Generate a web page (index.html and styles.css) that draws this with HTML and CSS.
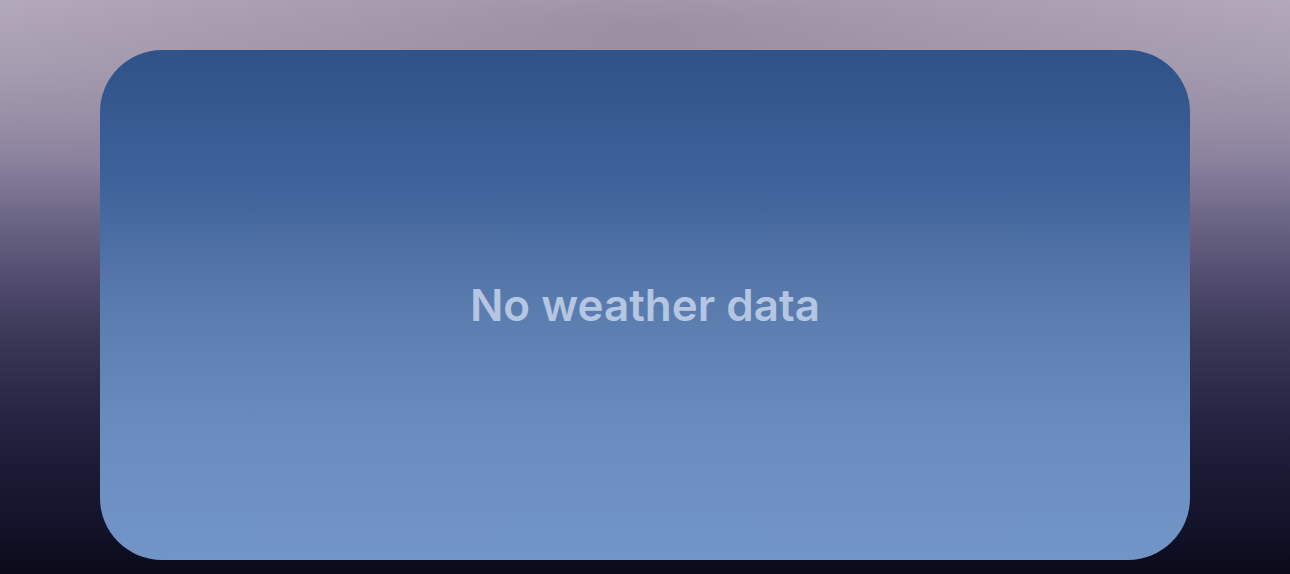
FILE: index.html
```html
<!DOCTYPE html>
<html>
<head>
<meta charset="utf-8">
<link rel="stylesheet" href="styles.css">
</head>
<body>
<div class="scene">
  <div class="card">
    <p class="empty">No weather data</p>
  </div>
</div>
</body>
</html>
```
FILE: styles.css
```css
html, body {
  margin: 0;
  padding: 0;
  width: 1290px;
  height: 574px;
  overflow: hidden;
}
.scene {
  width: 1290px;
  height: 574px;
  box-sizing: border-box;
  padding: 50px 100px 14px 100px;
  background:
    radial-gradient(ellipse 900px 170px at 50% 30px, rgba(140,122,145,0.6) 0%, rgba(140,122,145,0.3) 50%, rgba(140,122,145,0) 100%),
    linear-gradient(180deg, #bab2c2 0%, #aea6b8 10%, #9f96ac 18%, #8a819d 28%, #6c6686 38%, #534e70 48%, #3c3858 58%, #2a2747 70%, #1b1a34 82%, #12122a 92%, #0a0a18 100%);
}
.card {
  height: 510px;
  border-radius: 62px;
  background: linear-gradient(180deg, #2f5388 0%, #3d6199 25%, #5a7bad 50%, #6a8cc0 75%, #7295c7 100%);
  display: flex;
  align-items: center;
  justify-content: center;
}
.empty {
  margin: 0;
  font-family: Inter, "Noto Sans", sans-serif;
  font-weight: 600;
  font-size: 44px;
  color: #b5c6e2;
  letter-spacing: 0;
}
```
